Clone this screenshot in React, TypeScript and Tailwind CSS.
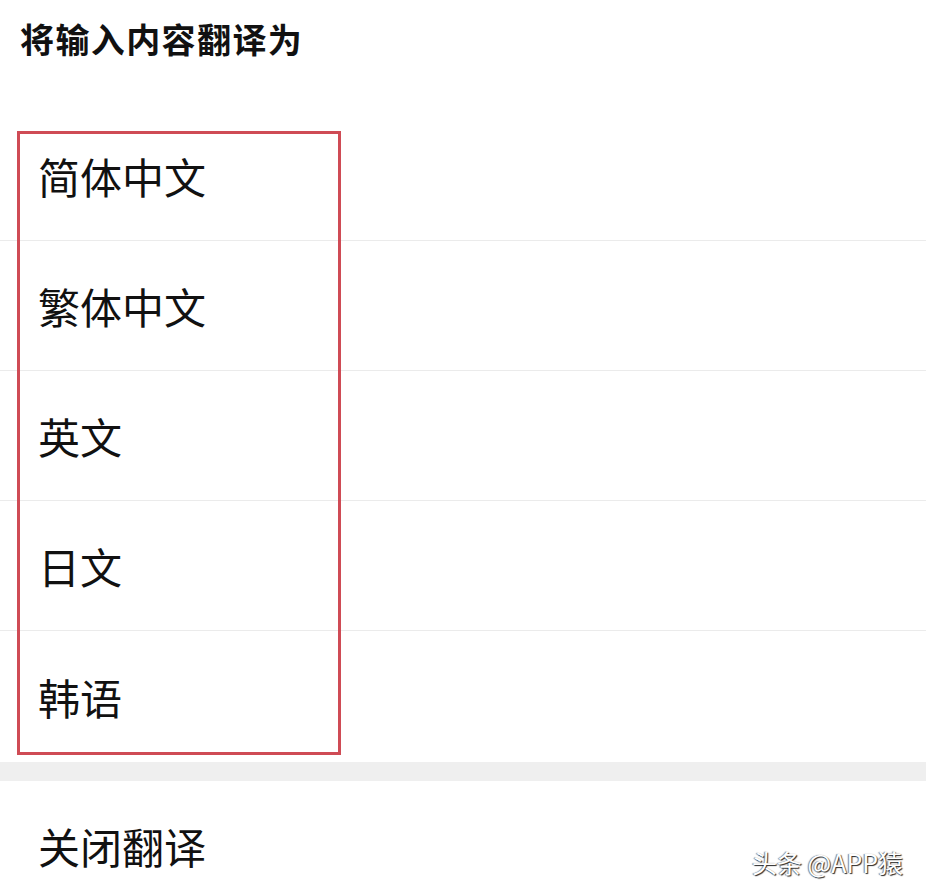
const LANGUAGES = ["简体中文", "繁体中文", "英文", "日文", "韩语"];

const App = () => {
  return (
    <div className="relative min-h-[895px] w-full overflow-hidden bg-white font-['Noto_Sans_CJK_SC',sans-serif] text-[#111]">
      <div className="h-[111px] pl-[20px] pt-[21px]">
        <h2 className="text-[34px] font-bold leading-[36px] tracking-[1.4px]">将输入内容翻译为</h2>
      </div>

      <div className="relative">
        {LANGUAGES.map((lang, i) => (
          <div
            key={lang}
            className={
              i < LANGUAGES.length - 1
                ? "flex h-[130px] items-center border-b border-[#ebebeb] pl-[38px]"
                : "flex h-[131px] items-center pl-[38px]"
            }
          >
            <span className="text-[42px] leading-none">{lang}</span>
          </div>
        ))}
        {/* highlight frame drawn over the list */}
        <div
          className="pointer-events-none absolute left-[17px] top-[20px] h-[624px] w-[324px] border-[3px] border-[#cf4b55]"
          aria-hidden="true"
        />
      </div>

      <div className="h-[19px] bg-[#efefef]" />

      <div className="flex h-[130px] items-center pl-[38px]">
        <span className="text-[42px] leading-none">关闭翻译</span>
      </div>

      <span className="absolute left-[752px] top-[847px] text-[25px] leading-[30px] text-white [text-shadow:1px_1px_1px_rgba(0,0,0,0.85),-1px_0_1px_rgba(0,0,0,0.5)]">
        头条 @APP猿
      </span>
    </div>
  );
};

export default App;
